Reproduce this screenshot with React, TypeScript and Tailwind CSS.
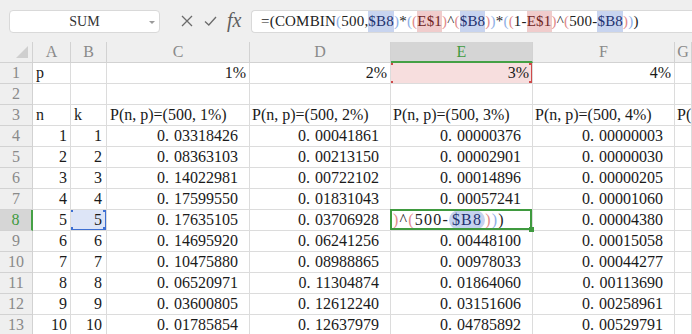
import React from "react";

type Tok = { t: string; k: "k" | "lb" | "pk" | "bh" | "ph" };

const formula: Tok[] = [
  { t: "=", k: "k" },
  { t: "(", k: "k" },
  { t: "COMBIN", k: "k" },
  { t: "(", k: "lb" },
  { t: "500, ", k: "k" },
  { t: "$B8", k: "bh" },
  { t: ")", k: "lb" },
  { t: "*", k: "k" },
  { t: "(", k: "lb" },
  { t: "(", k: "pk" },
  { t: "E$1", k: "ph" },
  { t: ")", k: "pk" },
  { t: "^", k: "k" },
  { t: "(", k: "pk" },
  { t: "$B8", k: "bh" },
  { t: ")", k: "pk" },
  { t: ")", k: "lb" },
  { t: "*", k: "k" },
  { t: "(", k: "lb" },
  { t: "(", k: "pk" },
  { t: "1-", k: "k" },
  { t: "E$1", k: "ph" },
  { t: ")", k: "pk" },
  { t: "^", k: "k" },
  { t: "(", k: "pk" },
  { t: "500-", k: "k" },
  { t: "$B8", k: "bh" },
  { t: ")", k: "pk" },
  { t: ")", k: "lb" },
  { t: ")", k: "k" },
];

function tokClass(k: Tok["k"]) {
  switch (k) {
    case "lb":
      return "text-[#8fb0e6]";
    case "pk":
      return "text-[#e28b8b]";
    case "bh":
      return "bg-[#c8d4ef] text-[#1f3270]";
    case "ph":
      return "bg-[#f0cccc] text-[#6e2424]";
    default:
      return "text-[#222]";
  }
}

const rows: [number, string, string, string, string][] = [
  [1, "0.03318426", "0.00041861", "0.00000376", "0.00000003"],
  [2, "0.08363103", "0.00213150", "0.00002901", "0.00000030"],
  [3, "0.14022981", "0.00722102", "0.00014896", "0.00000205"],
  [4, "0.17599550", "0.01831043", "0.00057241", "0.00001060"],
  [5, "0.17635105", "0.03706928", "", "0.00004380"],
  [6, "0.14695920", "0.06241256", "0.00448100", "0.00015058"],
  [7, "0.10475880", "0.08988865", "0.00978033", "0.00044277"],
  [8, "0.06520971", "0.11304874", "0.01864060", "0.00113690"],
  [9, "0.03600805", "0.12612240", "0.03151606", "0.00258961"],
  [10, "0.01785854", "0.12637979", "0.04785892", "0.00529791"],
];

function Num({ v }: { v: string }) {
  const [a, b] = v.split(".");
  return (
    <span>
      {a}.<span className="ml-[5px]">{b}</span>
    </span>
  );
}

const cell =
  "border-r border-b border-[#dcdcdc] bg-white overflow-hidden whitespace-nowrap flex items-center leading-[20px] text-[16px] text-[#1a1a1a]";
const rowHead =
  "border-r border-b border-[#d2d2d2] bg-[#efefef] flex items-center justify-center text-[16px] text-[#8a8a8a]";
const colHead =
  "border-r border-b border-[#d2d2d2] bg-[#efefef] flex items-center justify-center text-[16px] text-[#8a8a8a]";

function Handles({ color }: { color: string }) {
  return (
    <>
      <span className={`absolute -left-[3px] -top-[3px] w-[5px] h-[5px] ${color}`} />
      <span className={`absolute -right-[3px] -top-[3px] w-[5px] h-[5px] ${color}`} />
      <span className={`absolute -left-[3px] -bottom-[3px] w-[5px] h-[5px] ${color}`} />
      <span className={`absolute -right-[3px] -bottom-[3px] w-[5px] h-[5px] ${color}`} />
    </>
  );
}

export default function App() {
  const pHead = (pct: string) => `P(n, p)=(500, ${pct})`;
  return (
    <div className="w-[692px] h-[334px] overflow-hidden bg-white font-[family-name:'Liberation_Serif',serif]">
      {/* toolbar */}
      <div className="h-[42px] bg-[#efefef] flex items-center pl-[9px]">
        <div className="relative w-[151px] h-[23px] bg-white border border-[#d9d9d9] rounded-[4px] flex items-center justify-center text-[14px] text-[#333]">
          SUM
          <span className="absolute right-[4px] top-[10px] w-0 h-0 border-l-[3px] border-r-[3px] border-t-[3px] border-l-transparent border-r-transparent border-t-[#9a9a9a]" />
        </div>
        <svg className="ml-[21px]" width="12" height="12" viewBox="0 0 12 12">
          <path d="M1 1L11 11M11 1L1 11" stroke="#6b6b6b" strokeWidth="1.3" fill="none" />
        </svg>
        <svg className="ml-[11px]" width="13" height="12" viewBox="0 0 13 12">
          <path d="M1 6.5L4.8 10L12 2" stroke="#6b6b6b" strokeWidth="1.3" fill="none" />
        </svg>
        <span className="ml-[10px] w-[18px] text-[20px] leading-none italic text-[#5f5f5f] -mt-[3px]">
          fx
        </span>
        <div className="ml-[6px] flex-1 h-[23px] bg-white border border-r-0 border-[#d9d9d9] rounded-l-[4px] flex items-center pl-[9px] whitespace-nowrap overflow-hidden text-[15px] tracking-[0.2px]">
          {formula.map((f, i) => (
            <span key={i} className={tokClass(f.k)}>
              {f.t}
            </span>
          ))}
        </div>
      </div>

      {/* grid */}
      <div className="grid grid-cols-[33px_38px_36px_143px_141px_142px_142px_1fr] auto-rows-[21px]">
        {/* header row */}
        <div className={`${colHead} relative`}>
          <svg className="absolute right-[4px] bottom-[4px]" width="12" height="12" viewBox="0 0 12 12">
            <path d="M12 0L12 12L0 12Z" fill="#cfcfcf" />
          </svg>
        </div>
        <div className={colHead}>A</div>
        <div className={colHead}>B</div>
        <div className={colHead}>C</div>
        <div className={colHead}>D</div>
        <div className={`${colHead} !bg-[#d5d5d5] !text-[#3f9a3f] !border-b-2 !border-b-[#45a045]`}>E</div>
        <div className={colHead}>F</div>
        <div className={colHead}>G</div>

        {/* row 1 */}
        <div className={rowHead}>1</div>
        <div className={`${cell} pl-[3px]`}>p</div>
        <div className={cell}></div>
        <div className={`${cell} justify-end pr-[3px]`}>1%</div>
        <div className={`${cell} justify-end pr-[3px]`}>2%</div>
        <div className={`${cell} justify-end pr-[3px] relative !bg-[#f7dede]`}>
          3%
          <span className="absolute -left-[1px] top-0 -right-0 -bottom-[1px] border-[1.5px] border-t-0 border-[#cf4a4a]">
            <Handles color="bg-[#cf4a4a]" />
          </span>
        </div>
        <div className={`${cell} justify-end pr-[3px]`}>4%</div>
        <div className={cell}></div>

        {/* row 2 */}
        <div className={rowHead}>2</div>
        <div className={cell}></div>
        <div className={cell}></div>
        <div className={cell}></div>
        <div className={cell}></div>
        <div className={cell}></div>
        <div className={cell}></div>
        <div className={cell}></div>

        {/* row 3 */}
        <div className={rowHead}>3</div>
        <div className={`${cell} pl-[3px]`}>n</div>
        <div className={`${cell} pl-[3px]`}>k</div>
        <div className={`${cell} pl-[3px]`}>{pHead("1%")}</div>
        <div className={`${cell} pl-[2px]`}>{pHead("2%")}</div>
        <div className={`${cell} pl-[2px]`}>{pHead("3%")}</div>
        <div className={`${cell} pl-[2px]`}>{pHead("4%")}</div>
        <div className={`${cell} pl-[2px]`}>{pHead("5%")}</div>

        {rows.map((r, i) => {
          const rn = i + 4;
          const active = rn === 8;
          return (
            <React.Fragment key={rn}>
              <div
                className={`${rowHead} ${
                  active ? "!bg-[#d6d6d6] !text-[#3f9a3f] !border-r-2 !border-r-[#45a045]" : ""
                }`}
              >
                {rn}
              </div>
              <div className={`${cell} justify-end pr-[3px]`}>{r[0]}</div>
              <div
                className={`${cell} justify-end pr-[4px] ${active ? "relative !bg-[#dde5f7]" : ""}`}
              >
                {r[0]}
                {active && (
                  <span className="absolute -left-[1px] -top-[1px] right-0 bottom-0 border-[1.5px] border-[#3d6fd2]">
                    <Handles color="bg-[#3d6fd2]" />
                  </span>
                )}
              </div>
              <div className={`${cell} justify-end pr-[11px]`}>
                <Num v={r[1]} />
              </div>
              <div className={`${cell} justify-end pr-[11px]`}>
                <Num v={r[2]} />
              </div>
              {active ? (
                <div className={`${cell} relative pl-[2px] !overflow-visible tracking-[1.2px]`}>
                  <span className="text-[#e28b8b]">)</span>
                  <span className="text-[#222]">^</span>
                  <span className="text-[#e28b8b]">(</span>
                  <span className="text-[#222]">500-</span>
                  <span className="bg-[#c5d2ef] text-[#1f3270] rounded-full px-[3px]">$B8</span>
                  <span className="text-[#e28b8b]">)</span>
                  <span className="text-[#8fb0e6]">)</span>
                  <span className="text-[#222]">)</span>
                  <span className="absolute -left-[1px] -top-[1px] right-0 bottom-0 border-2 border-[#3f9a3f]" />
                  <span className="absolute -right-[2px] -bottom-[2px] w-[5px] h-[5px] bg-[#3f9a3f]" />
                </div>
              ) : (
                <div className={`${cell} justify-end pr-[11px]`}>
                  <Num v={r[3]} />
                </div>
              )}
              <div className={`${cell} justify-end pr-[11px]`}>
                <Num v={r[4]} />
              </div>
              <div className={cell}></div>
            </React.Fragment>
          );
        })}
      </div>
    </div>
  );
}
